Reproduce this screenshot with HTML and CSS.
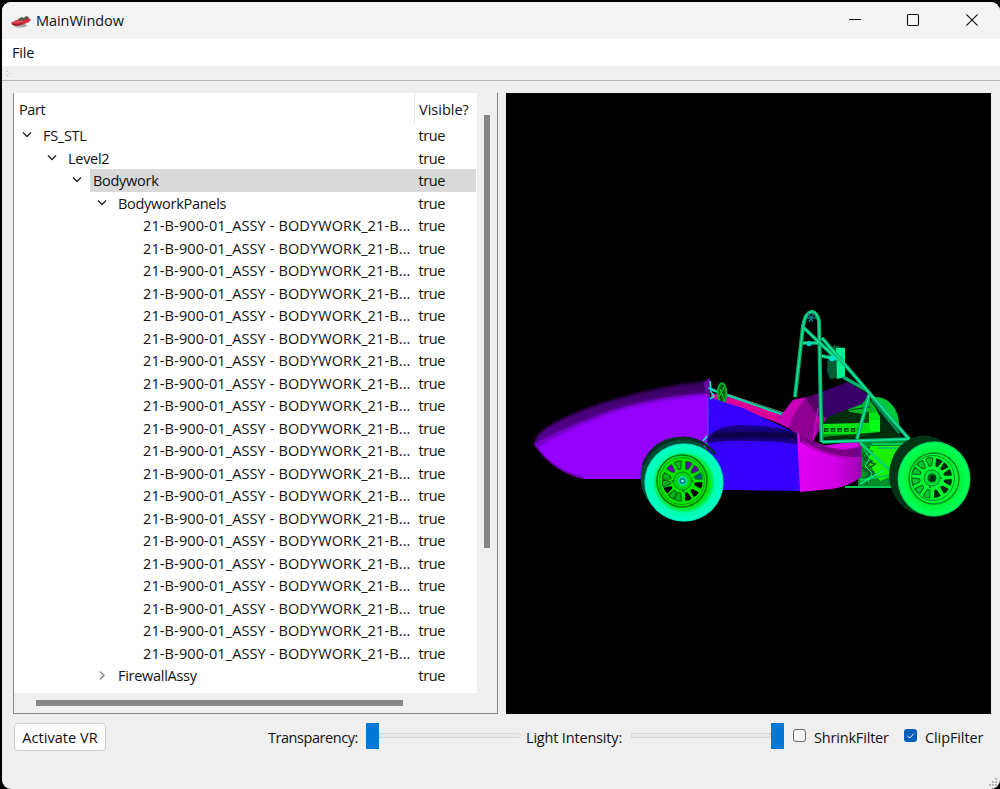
FILE: index.html
```html
<!DOCTYPE html>
<html lang="en">
<head>
<meta charset="utf-8">
<title>MainWindow</title>
<link rel="stylesheet" href="styles.css">
</head>
<body>
<div class="window">
  <header class="titlebar">
    <svg class="app-icon" width="20" height="14" viewBox="0 0 20 14">
      <ellipse cx="9" cy="10.500" rx="7" ry="2" fill="#aaa"/>
      <path d="M0 8 4 5.500 10 4 17 3 20 4.500 18 7 11 10 5 11 1 9.500Z" fill="#d32f3a"/>
      <path d="M7 4 11 2 13 3 15 1 18 2 17 4 13 5 9 6Z" fill="#5a504a"/>
      <path d="M1 9 7 10 11 8" fill="none" stroke="#7c1c22"/>
      <path d="M3 7 8 7 12 6" fill="none" stroke="#e86a6a"/>
    </svg>
    <span class="title">MainWindow</span>
    <svg class="win-buttons" width="132" height="14" viewBox="0 0 132 14" fill="none" stroke="#111" stroke-width="1.1">
      <path d="M1 6.5H13"/>
      <rect x="59.5" y="1.5" width="11" height="11" rx="1.2"/>
      <path d="M118.300 1.300 129.700 12.700M129.700 1.300 118.300 12.700"/>
    </svg>
  </header>
  <nav class="menubar"><span>File</span></nav>
  <div class="toolbar"><svg width="6" height="8" viewBox="0 0 6 8" fill="#b0b0b0"><path d="M2 1h1v1h-1zM2 5h1v1h-1zM4 3h1v1h-1z"/></svg></div>
  <main class="content">
    <section class="tree">
      <div class="table">
        <div class="head"><span class="part">Part</span><span class="vis">Visible?</span></div>
        <div class="rows" id="rows"></div>
      </div>
      <div class="vscroll"><div class="vthumb"></div></div>
      <div class="hscroll"><div class="hthumb"></div></div>
    </section>
    <section class="viewport">
      <svg width="485" height="621" viewBox="506 93 485 621">
        <defs>
          <linearGradient id="nose" x1="0" y1="0" x2="0" y2="1">
            <stop offset="0" stop-color="#38005e"/><stop offset="1" stop-color="#5c009c"/>
          </linearGradient>
          <linearGradient id="pod" x1="0" y1="0" x2="0" y2="1">
            <stop offset="0" stop-color="#1a0090"/><stop offset=".5" stop-color="#12005c"/><stop offset="1" stop-color="#2600b8"/>
          </linearGradient>
          <linearGradient id="rearpod" x1="0" y1="0" x2="1" y2="0">
            <stop offset="0" stop-color="#e400f4"/><stop offset=".6" stop-color="#d000e4"/><stop offset="1" stop-color="#9c00b0"/>
          </linearGradient>
          <radialGradient id="tyreF">
            <stop offset=".62" stop-color="#00e600"/><stop offset=".72" stop-color="#00f060"/><stop offset=".78" stop-color="#00ffb0"/><stop offset=".96" stop-color="#00ffc8"/><stop offset="1" stop-color="#00c898"/>
          </radialGradient>
          <radialGradient id="tyreR">
            <stop offset=".7" stop-color="#00f532"/><stop offset=".94" stop-color="#00ff5c"/><stop offset="1" stop-color="#00c848"/>
          </radialGradient>
          <filter id="soft" x="-10%" y="-10%" width="120%" height="120%"><feGaussianBlur stdDeviation="1.6"/></filter>
          <filter id="edge"><feGaussianBlur stdDeviation=".4"/></filter>
          <path id="hole" d="M-3.500-19.500Q0-21 3.500-19.500L1.500-13Q0-11-1.500-13Z"/>
        </defs>
        <g filter="url(#edge)">
          <!-- far rear wheel, engine -->
          <ellipse cx="876" cy="424" rx="23" ry="27" fill="#00c83c"/>
          <ellipse cx="872" cy="425" rx="19" ry="23" fill="#00ee38"/>
          <path d="M822 420 850 400 868 395 900 432 902 441H820Z" fill="#032f08"/>
          <path d="M846 407 868 398 878 411 876 416 850 412Z" fill="#00b828"/>
          <path d="M852 405 865 400M850 410 870 407" stroke="#003c10" fill="none"/>
          <path d="M821 424 861 423 868 420 868 413 880 412V432L820 437Z" fill="#00e414"/>
          <path d="M862 412H869V423H862Z" fill="#065010"/>
          <path d="M824 430h36" stroke="#064d08" stroke-width="4" stroke-dasharray="4.500 2.200"/>
          <path d="M825.500 430.500h34" stroke="#00d820" stroke-width="1.500" stroke-dasharray="2 4.700"/>
          <path d="M820 435H868" stroke="#005c14" stroke-width="1"/>
          <path d="M870 420h10v11h-10z" fill="#00ff18"/>
          <path d="M877 403Q888 420 902 433L899 436Q880 422 875 406Z" fill="#002b16"/>
          <!-- rear suspension -->
          <path d="M858 440H912L900 488H858Z" fill="#008f2c"/>
          <path d="M870 446H906L892 476 880 481 868 462Z" fill="#1ef000"/>
          <path d="M862 446 872 452 864 460 875 464 865 471 875 476 866 484M869 447 862 456 872 461 862 468 873 472 862 480" fill="none" stroke="#005828" stroke-width="1.500"/>
          <path d="M864 450 870 458 865 466 872 473 868 483" fill="none" stroke="#00ef67"/>
          <path d="M860 480 892 475M845 487 898 487M872 444H912M878 448H902" fill="none" stroke="#00c854" stroke-width="2"/>
          <path d="M857 440 894 474" stroke="#00d86a" stroke-width="3"/>
          <path d="M860 484 884 470M890 482 893 486" stroke="#00f080" stroke-width="1.500"/>
          <!-- cockpit -->
          <path d="M711 393 724 395 783 414 779 423 711 400Z" fill="#db0098"/>
          <path d="M712 390 784 415" stroke="#00dca0" stroke-width="2" fill="none"/>
          <path d="M712 389 784 413" stroke="#9af0d8" stroke-width=".6"/>
          <path d="M778 419 793 400 805 398 832 410 812 442 796 434Z" fill="#9c00a0"/>
          <path d="M778 420 793 400 806 397 794 414 788 428 774 421Z" fill="#c800b8"/>
          <path d="M806 397 821 402 812 441 790 428 794 415Z" fill="#900090"/>
          <path d="M805 398 848 382 869 395 862 404 825 418 819 410Z" fill="#380068"/>
          <path d="M805 398 819 393 819 418Z" fill="#580068"/>
          <path d="M818 408 813 441" stroke="#e800e8" stroke-width="1"/>
          <ellipse cx="722" cy="393" rx="4.300" ry="9.800" fill="#005c0a" stroke="#00a82d" stroke-width="2"/>
          <path d="M720 389 725 402M724 387 719 397" stroke="#00d948"/>
          <!-- nose -->
          <path d="M534 444C536 430 558 420 585 409C626 394 673 384 709 381V451H650Q620 453 534 444Z" fill="url(#nose)" filter="url(#soft)"/>
          <path d="M534 444C570 425 604 411 638 403Q673 395 709 393V448L660 479H584C566 476 548 464 534 444Z" fill="#9600ff"/>
          <path d="M536 445C570 426 605 410 640 403Q675 395 708 393" fill="none" stroke="#5c009c" stroke-width="4" opacity=".7" filter="url(#soft)"/>
          <path d="M536 446Q551 470 584 478" fill="none" stroke="#5e0094" stroke-width="2" opacity=".8"/>
          <path d="M703 382 710 378V399L707 396Z" fill="#69009a"/>
          <!-- side pods -->
          <path d="M708 397 743 408 802 436V490H709Z" fill="#3500ff"/>
          <path d="M707 440Q714 425 743 425Q785 426 800 435L802 448Q765 439 725 441Q712 443 706 444Z" fill="url(#pod)"/>
          <path d="M709 438Q742 429 800 437" fill="none" stroke="#0c0040" stroke-width="6" opacity=".65" filter="url(#soft)"/>
          <path d="M710 446Q750 437 801 445V491Q760 491 710 489Z" fill="#3600ff"/>
          <path d="M797 433 822 447 858 441 862 448 861 477Q850 486 832 489L800 492Z" fill="url(#rearpod)"/>
          <path d="M799 434Q820 446 844 450L861 447V458Q836 462 800 442Z" fill="#780084"/>
          <path d="M822 446 857 441 858 447 840 449Z" fill="#db00e7"/>
          <path d="M802 441Q830 459 860 458" fill="none" stroke="#b200c0" stroke-width="2"/>
          <path d="M708 397V434L705 443" fill="none" stroke="#3a80d8" stroke-width=".7"/>
          <path d="M710 381 711 392 714 396 710 399M708 388 715 390M703 441 707 436M704 447 707 443" fill="none" stroke="#24d8d2" stroke-width="1.600"/>
          <!-- roll hoop and frame -->
          <path d="M834 345 845 348V377L830 379 827 371 828 354Z" fill="#005c36"/>
          <path d="M836 348H845V377L837 379Z" fill="#00f096"/>
          <path d="M795 397 803 326C806 308 816 308 819 321L821.500 442" fill="none" stroke="#00a864" stroke-width="4"/>
          <path d="M795 397 803 326C806 308 816 308 819 321L821.500 442" fill="none" stroke="#18e094" stroke-width="1.500"/>
          <g fill="none" stroke="#00b06c" stroke-width="3.700">
            <path d="M804 328 839 361M822 338 909 439M803 343H818M822 356 836 359M869 395 857 439M843 377 868 391M822 442 910 439"/>
          </g>
          <g fill="none" stroke="#18e89c" stroke-width="1.300">
            <path d="M804 328 839 361M822 338 909 439M803 343H818M822 356 836 359M869 395 857 439M822 442 910 439"/>
          </g>
          <path d="M872 400 899 433" stroke="#008b54" stroke-width="2"/>
          <path d="M808 313 813 322M814 313 809 322M807 318H816" stroke="#007f8a" stroke-width="1.500"/>
          <circle cx="809" cy="343.500" r="2.700" fill="#00cdbc"/><circle cx="832" cy="358.500" r="2.800" fill="#00e4d4"/>
        </g>
        <!-- front wheel -->
        <g filter="url(#edge)">
          <ellipse cx="679" cy="477" rx="38.500" ry="40" fill="#004b36"/>
          <path d="M643 465Q654 439 684 438Q703 439 715 454" fill="none" stroke="#002f23" stroke-width="3"/>
          <ellipse cx="684" cy="482.500" rx="39.700" ry="39.300" fill="url(#tyreF)"/>
          <g fill="none" stroke="#007c0b">
            <ellipse cx="682" cy="481" rx="25" ry="26" stroke-width="1.500"/>
            <ellipse cx="682" cy="481" rx="22.500" ry="23.500" stroke="#00a00d"/>
          </g>
          <g transform="translate(682.500 481)">
            <g fill="#000">
              <use href="#hole" transform="rotate(103)"/><use href="#hole" transform="rotate(135)"/><use href="#hole" transform="rotate(162)"/><use href="#hole" transform="rotate(240)"/>
            </g>
            <g fill="#6500a8" stroke="#006e16" stroke-width=".8">
              <use href="#hole" transform="rotate(20)"/><use href="#hole" transform="rotate(47)"/><use href="#hole" transform="rotate(75)" fill="#005b76"/><use href="#hole" transform="rotate(-43)"/>
            </g>
            <g fill="#00b51a" stroke="#005d0a" stroke-width="1">
              <use href="#hole" transform="rotate(-14)"/><use href="#hole" transform="rotate(-75)"/><use href="#hole" transform="rotate(-98)"/><use href="#hole" transform="rotate(194)"/><use href="#hole" transform="rotate(215)"/>
            </g>
            <circle r="9" fill="#00d51a" stroke="#008915"/>
            <circle r="5" fill="#00df91"/><circle r="3" fill="#007d85"/><circle r="1.300" fill="#94fff0"/>
            <circle cx="1" cy="10" r="1.300" fill="#006d38"/><circle cx="10" cy="0" r="1" fill="#006d12"/><circle cx="-10" cy="0" r="1" fill="#006d12"/>
          </g>
          <!-- rear wheel -->
          <ellipse cx="924" cy="475" rx="35" ry="39.500" fill="#003618"/>
          <ellipse cx="934" cy="479" rx="36.500" ry="37.700" fill="url(#tyreR)"/>
          <g fill="none" stroke="#008f26">
            <ellipse cx="934" cy="478.500" rx="25" ry="25.500" stroke-width="1.500"/>
            <ellipse cx="933" cy="478" rx="21.500" ry="22.500"/>
          </g>
          <g transform="translate(932 478)">
            <g fill="#002c0b">
              <use href="#hole" transform="rotate(22)"/><use href="#hole" transform="rotate(47)"/><use href="#hole" transform="rotate(73)"/><use href="#hole" transform="rotate(103)"/><use href="#hole" transform="rotate(133)"/><use href="#hole" transform="rotate(164)"/>
            </g>
            <g fill="#00c92d" stroke="#006218" stroke-width="1">
              <use href="#hole" transform="rotate(-8)"/><use href="#hole" transform="rotate(-38)"/><use href="#hole" transform="rotate(-68)"/><use href="#hole" transform="rotate(-100)"/><use href="#hole" transform="rotate(-132)"/><use href="#hole" transform="rotate(-164)"/>
            </g>
            <circle r="8" fill="#00df35" stroke="#008925"/>
            <circle r="4.500" fill="#006018"/><path d="M-1-3 4-2 3 3-2 3Z" fill="#00280d"/>
            <circle cx="9" cy="0" r="1" fill="#006218"/><circle cx="-2" cy="9" r="1" fill="#006218"/>
          </g>
        </g>
      </svg>
    </section>
  </main>
  <footer class="controls">
    <button class="vr" type="button"><span>Activate VR</span></button>
    <span class="label transparency">Transparency:</span>
    <div class="slider low"><i class="handle"></i><i class="track"></i></div>
    <span class="label light">Light Intensity:</span>
    <div class="slider high"><i class="track"></i><i class="handle"></i></div>
    <span class="check"></span>
    <span class="label shrink">ShrinkFilter</span>
    <span class="check on"><svg width="13" height="13" viewBox="0 0 13 13"><path d="M3.300 6.700 5.600 9 10 4.600" fill="none" stroke="#fff"/></svg></span>
    <span class="label clip">ClipFilter</span>
  </footer>
  <svg class="grip" width="8" height="8" viewBox="0 0 8 8" fill="#b8b8b8"><path d="M6 0h2v2h-2zM3 3h2v2h-2zM6 3h2v2h-2zM0 6h2v2h-2zM3 6h2v2h-2zM6 6h2v2h-2z"/></svg>
</div>
<script src="tree.js"></script>
</body>
</html>
```
FILE: styles.css
```css
* { box-sizing: border-box; }
body {
  margin: 0;
  height: 789px;
  padding: 2px 0 0 2px;
  background: #000;
  overflow: hidden;
  font: 14.5px/22px "Open Sans", "Noto Sans", sans-serif;
  color: #111;
  white-space: nowrap;
}
.window {
  position: relative;
  height: 787px;
  background: #efefef;
  border-radius: 9px;
  overflow: hidden;
}
.titlebar {
  height: 37px;
  background: #f3f3f3;
  display: flex;
  align-items: center;
  padding: 0 20px 0 9px;
}
.app-icon { margin-top: 3px; }
.title { margin-left: 5px; letter-spacing: -0.05px; }
.win-buttons { margin-left: auto; margin-top: -1px; }
.menubar { height: 27px; background: #fff; padding: 3px 10px; letter-spacing: -0.15px; }
.toolbar { height: 15px; border-bottom: 1px solid #b4b4b4; padding: 4px 3px; line-height: 0; }
.content { display: flex; gap: 8px; padding: 12px 0 0 11px; height: 633px; }
.tree {
  width: 485px;
  height: 621px;
  border: solid #868686;
  border-width: 0 1px 1px;
  display: grid;
  grid-template: 600px 20px / 463px 20px;
}
.table { background: #fff; overflow: hidden; }
.head { height: 31px; display: flex; line-height: 33px; }
.part { width: 400px; padding-left: 5px; letter-spacing: -0.4px; }
.vis { border-left: 1px solid #e4e4e4; padding-left: 4px; flex: 1; }
.row { display: flex; height: 22.5px; line-height: 23px; }
.arrow { width: 26px; flex: none; padding: 4px 0 0 7.5px; line-height: 0; }
.name { flex: 1; padding-left: 3px; letter-spacing: -0.28px; }
.leaf .name { letter-spacing: 0.12px; }
.val { width: 62px; padding-left: 3.5px; letter-spacing: -0.4px; }
.row .val { flex: none; }
.selected .name, .selected .val { background: #d9d9d9; }
.selected .val { margin-right: 1px; width: 61px; }
.vscroll { padding: 22px 0 0 7px; }
.vthumb { width: 6px; height: 433px; background: #868686; }
.hscroll { padding: 7px 0 0 22px; }
.hthumb { width: 367px; height: 6px; background: #868686; }
.viewport { width: 485px; height: 621px; background: #000; line-height: 0; }
.controls { display: flex; height: 46px; padding: 9px 0 0 12px; }
.vr {
  width: 92px;
  height: 28px;
  padding: 2px 0 0;
  border: 1px solid #cecece;
  border-radius: 4px;
  background: #fdfdfd;
  font: inherit;
  color: inherit;
  letter-spacing: 0.05px;
}
.label { line-height: 30px; letter-spacing: -0.18px; }
.transparency { margin-left: 162px; width: 98px; letter-spacing: -0.45px; }
.slider { width: 153px; display: flex; height: 26px; align-items: center; }
.handle { width: 13px; height: 26px; background: #0078d7; }
.track { flex: 1; height: 5px; margin-bottom: 1px; border: 1px solid #d8d8d8; background: #e8e8e8; }
.light { margin-left: 7px; width: 105px; }
.check { width: 13px; height: 13px; margin: 6px 0 0 9px; border: 1px solid #686868; border-radius: 3px; background: #f5f5f5; line-height: 0; }
.check.on { border: 0; background: #005fb8; margin-left: 0; }
.shrink { margin-left: 8px; width: 90px; }
.clip { margin-left: 8px; letter-spacing: -0.1px; }
.grip { position: absolute; right: 3px; bottom: 3px; }
```
FILE: tree.js
```js
const leaf = "21-B-900-01_ASSY - BODYWORK_21-B...";
const items = [
  ["FS_STL", 0, "open"],
  ["Level2", 1, "open"],
  ["Bodywork", 2, "open"],
  ["BodyworkPanels", 3, "open"],
  ...Array.from({ length: 20 }, () => [leaf, 4, "leaf"]),
  ["FirewallAssy", 3, "closed"],
];
const icons = {
  open: '<svg width="10" height="12" viewBox="0 0 10 12"><path d="M1 4.500 5 8.500 9 4.500" fill="none" stroke="#222" stroke-width="1.4"/></svg>',
  closed: '<svg width="10" height="14" viewBox="0 0 10 14"><path d="M3 3.500 7 7.500 3 11.500" fill="none" stroke="#888" stroke-width="1.500"/></svg>',
  leaf: "",
};
document.getElementById("rows").innerHTML = items.map(([name, depth, kind]) =>
  `<div class="row ${kind} ${name === "Bodywork" ? "selected" : ""}" style="padding-left:${depth * 25}px">` +
  `<span class="arrow">${icons[kind]}</span><span class="name">${name}</span><span class="val">true</span></div>`
).join("");
```
